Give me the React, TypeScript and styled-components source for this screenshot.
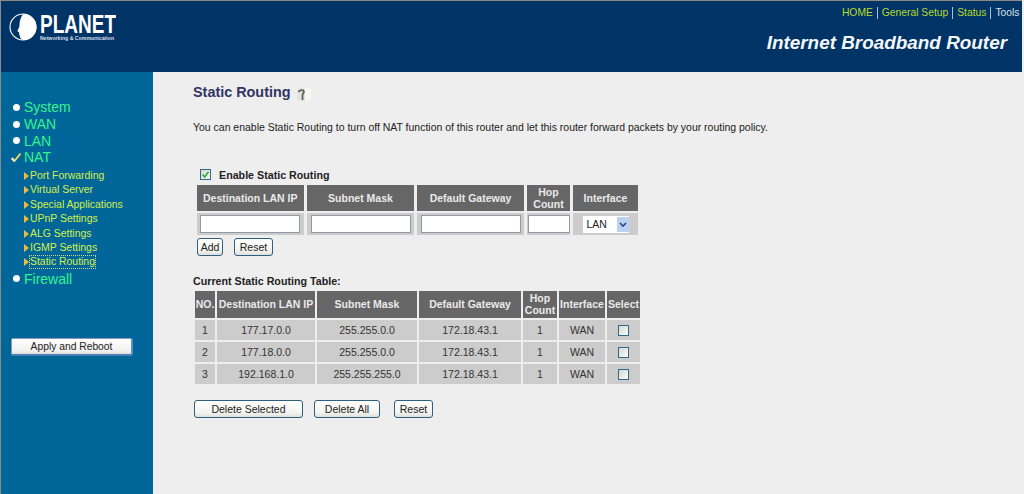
import React from "react";
import styled, { createGlobalStyle } from "styled-components";

const GlobalStyle = createGlobalStyle`
  html, body {
    margin: 0;
    padding: 0;
    background: #eeeeee;
    overflow: hidden;
  }
  body {
    font-family: "Liberation Sans", Arial, sans-serif;
  }
`;

const Page = styled.div`
  width: 1021px;
  height: 493px;
  border-top: 1px solid #8a8a80;
  border-left: 1px solid #8a8a8a;
  display: grid;
  grid-template-columns: 152px 1fr;
  grid-template-rows: 71px 1fr;
`;

const Header = styled.header`
  grid-column: 1 / 3;
  background: #003366;
  display: flex;
  justify-content: space-between;
`;

const Logo = styled.div`
  display: flex;
  align-items: flex-start;
  padding: 12px 0 0 8px;
  gap: 3px;
`;

const LogoText = styled.div`
  display: flex;
  flex-direction: column;
  margin-top: 1px;
`;

const LogoName = styled.span`
  color: #ffffff;
  font-size: 25px;
  font-weight: 700;
  line-height: 20px;
  height: 20px;
  width: 77px;
  transform: scaleX(0.76);
  transform-origin: left center;
  white-space: nowrap;
`;

const LogoTag = styled.span`
  color: #d5deea;
  font-size: 5.2px;
  font-weight: 700;
  line-height: 6px;
  margin-top: 1px;
  white-space: nowrap;
`;

const HeaderRight = styled.div`
  display: flex;
  flex-direction: column;
  align-items: flex-end;
  padding: 5px 2.5px 0 0;
`;

const TopLinks = styled.nav`
  display: flex;
  align-items: center;
  font-size: 10.3px;
  line-height: 13px;
  height: 13px;
`;

const TopLink = styled.a<{ $active?: boolean }>`
  color: ${(p) => (p.$active ? "#d9e2ea" : "#b8dc2e")};
  text-decoration: none;
`;

const Separator = styled.span`
  width: 1px;
  height: 12px;
  background: #a9bfd4;
  margin: 0 4px;
`;

const Title = styled.h1`
  margin: 13px 12.5px 0 0;
  color: #f4f7fa;
  font-size: 18.9px;
  line-height: 22px;
  font-style: italic;
  font-weight: 700;
`;

const Sidebar = styled.aside`
  background: #006699;
  padding: 27px 0 0 9px;
`;

const MainItem = styled.a`
  display: flex;
  align-items: center;
  height: 16.7px;
  color: #33f58f;
  font-size: 14px;
`;

const Bullet = styled.span`
  width: 7px;
  height: 7px;
  margin: 0 4px 0 3px;
  border-radius: 50%;
  background: radial-gradient(circle at 40% 40%, #ffffff 55%, #b9c9e4 100%);
  flex: none;
`;

const CheckMark = styled.svg`
  width: 12px;
  height: 11px;
  margin: 0 2px 0 0;
  flex: none;
`;

const SubList = styled.div`
  display: flex;
  flex-direction: column;
  padding: 3px 0 1px 14px;
`;

const SubItem = styled.a<{ $current?: boolean }>`
  display: flex;
  align-items: center;
  height: 14.4px;
  color: #d4ef4a;
  font-size: 10.45px;
  white-space: nowrap;
  span {
    outline: ${(p) => (p.$current ? "1px dotted #c9d88a" : "none")};
    line-height: 12px;
  }
`;

const Arrow = styled.i`
  width: 0;
  height: 0;
  border-left: 5px solid #f0b93a;
  border-top: 4px solid transparent;
  border-bottom: 4px solid transparent;
  margin-right: 1px;
  flex: none;
`;

const RebootButton = styled.button`
  display: block;
  width: 122px;
  height: 18px;
  margin: 51px 0 0 1px;
  padding: 0;
  font: 10.3px "Liberation Sans", Arial, sans-serif;
  color: #222222;
  background: linear-gradient(#ffffff, #f0f0ee 80%, #dcdcd8);
  border: 1px solid #7f9db9;
  border-bottom: 2px solid #4a7fb5;
  border-right: 2px solid #5b8fc0;
  border-radius: 2px;
`;

const Main = styled.main`
  padding: 11px 0 0 40px;
  color: #222222;
  font-size: 11px;
`;

const Heading = styled.h2`
  display: flex;
  align-items: center;
  gap: 5px;
  margin: 0;
  height: 18px;
  color: #333366;
  font-size: 14.4px;
  font-weight: 700;
  svg {
    margin-top: 5px;
  }
`;

const Intro = styled.p`
  margin: 20px 0 0;
  font-size: 10.47px;
  line-height: 13px;
  white-space: nowrap;
`;

const EnableRow = styled.label`
  display: flex;
  align-items: center;
  gap: 8px;
  margin: 34px 0 0 7px;
  height: 13px;
  font-size: 10.7px;
  font-weight: 700;
`;

const Box = styled.span`
  display: inline-flex;
  align-items: center;
  justify-content: center;
  box-sizing: border-box;
  width: 11px;
  height: 11px;
  border: 1px solid #2f6a8e;
  background: linear-gradient(135deg, #d8d8d2, #fbfbf8);
  vertical-align: middle;
`;

const Table = styled.table<{ $width: number; $offset: number; $spacing: number; $top: number }>`
  border-collapse: separate;
  border-spacing: ${(p) => p.$spacing}px 2px;
  table-layout: fixed;
  width: ${(p) => p.$width}px;
  margin: ${(p) => p.$top}px 0 0 ${(p) => p.$offset}px;
`;

const Head = styled.th<{ $h?: number }>`
  background: #666666;
  color: #eaeaea;
  font-size: 10.5px;
  font-weight: 700;
  line-height: 12px;
  height: ${(p) => (p.$h ? `${p.$h}px` : "auto")};
  padding: 0;
  white-space: nowrap;
  text-align: center;
`;

const Cell = styled.td<{ $h: number }>`
  background: #cccccc;
  color: #333333;
  font-size: 10.5px;
  height: ${(p) => p.$h}px;
  padding: 0;
  text-align: center;
`;

const TextInput = styled.input<{ $w: number }>`
  display: block;
  box-sizing: border-box;
  width: ${(p) => p.$w}px;
  height: 18px;
  margin: 0 auto;
  background: #ffffff;
  border: 1px solid #8f9aa6;
  padding: 0;
`;

const SelectWrap = styled.div`
  position: relative;
  width: 46px;
  height: 17px;
  margin: 0 auto;
  background: #ffffff;
`;

const NativeSelect = styled.select`
  appearance: none;
  display: block;
  width: 100%;
  height: 100%;
  border: 0;
  background: transparent;
  padding: 0 0 0 4px;
  font: 10.5px "Liberation Sans", Arial, sans-serif;
  color: #222222;
`;

const SelectArrow = styled.svg`
  position: absolute;
  top: 1px;
  right: 0;
  width: 12px;
  height: 15px;
  background: #bcd0f2;
  pointer-events: none;
`;

const ButtonRow = styled.div<{ $gap: number; $top: number; $left: number }>`
  display: flex;
  gap: ${(p) => p.$gap}px;
  margin: ${(p) => p.$top}px 0 0 ${(p) => p.$left}px;
`;

const Btn = styled.button<{ $w: number; $push?: number }>`
  box-sizing: border-box;
  width: ${(p) => p.$w}px;
  height: 18px;
  margin-left: ${(p) => p.$push ?? 0}px;
  padding: 0;
  font: 10.5px "Liberation Sans", Arial, sans-serif;
  color: #222222;
  background: linear-gradient(#ffffff, #f2f2ee 75%, #dededa);
  border: 1px solid #2f5f7f;
  border-radius: 3px;
`;

const TableTitle = styled.h3`
  margin: 19px 0 0;
  height: 13px;
  font-size: 10.7px;
  line-height: 13px;
  font-weight: 700;
`;

const routes = [
  { no: 1, ip: "177.17.0.0", mask: "255.255.0.0", gw: "172.18.43.1", hop: 1, iface: "WAN" },
  { no: 2, ip: "177.18.0.0", mask: "255.255.0.0", gw: "172.18.43.1", hop: 1, iface: "WAN" },
  { no: 3, ip: "192.168.1.0", mask: "255.255.255.0", gw: "172.18.43.1", hop: 1, iface: "WAN" },
];

const subItems = [
  "Port Forwarding",
  "Virtual Server",
  "Special Applications",
  "UPnP Settings",
  "ALG Settings",
  "IGMP Settings",
  "Static Routing",
];

const App: React.FC = () => (
  <Page>
    <GlobalStyle />
    <Header>
      <Logo>
        <svg width="28" height="28" viewBox="0 0 28 28">
          <circle cx="14" cy="14" r="13" fill="#003366" stroke="#ffffff" strokeWidth="1.1" />
          <path
            d="M14 1C22 1 27.5 7 27.5 14S22 27.5 14 27C12 26 10.5 24.5 11 23C9.5 21.5 10.5 20 10 19C8.5 19 8 18 9 16.5C10 15 10.5 13.5 10.5 11.5C10.5 7.5 12 4 14 1Z"
            fill="#ffffff"
          />
        </svg>
        <LogoText>
          <LogoName>PLANET</LogoName>
          <LogoTag>Networking &amp; Communication</LogoTag>
        </LogoText>
      </Logo>
      <HeaderRight>
        <TopLinks>
          <TopLink>HOME</TopLink>
          <Separator />
          <TopLink>General Setup</TopLink>
          <Separator />
          <TopLink>Status</TopLink>
          <Separator />
          <TopLink $active>Tools</TopLink>
        </TopLinks>
        <Title>Internet Broadband Router</Title>
      </HeaderRight>
    </Header>

    <Sidebar>
      <MainItem><Bullet />System</MainItem>
      <MainItem><Bullet />WAN</MainItem>
      <MainItem><Bullet />LAN</MainItem>
      <MainItem>
        <CheckMark viewBox="0 0 12 11">
          <path d="M2 6L4.5 9L10.5 1.5" fill="none" stroke="#e8d860" strokeWidth="2" />
          <path d="M1.5 6.5L4 9" fill="none" stroke="#ffffff" strokeWidth="1.2" />
        </CheckMark>
        NAT
      </MainItem>
      <SubList>
        {subItems.map((item) => (
          <SubItem key={item} $current={item === "Static Routing"}>
            <Arrow />
            <span>{item}</span>
          </SubItem>
        ))}
      </SubList>
      <MainItem><Bullet />Firewall</MainItem>
      <RebootButton>Apply and Reboot</RebootButton>
    </Sidebar>

    <Main>
      <Heading>
        Static Routing
        <svg width="16" height="15" viewBox="0 0 16 15">
          <rect x="1" y="1" width="14" height="13" rx="3" fill="#e2e2de" />
          <path d="M9 1h4a2 2 0 0 1 2 2v9a2 2 0 0 1-2 2H9z" fill="#f6f6f4" />
          <path d="M2.5 5C3.5 2.5 7.5 2.5 8 4.5C8 6 6.5 6.5 6.5 8V13" fill="none" stroke="#5c5c58" strokeWidth="1.7" />
        </svg>
      </Heading>
      <Intro>
        You can enable Static Routing to turn off NAT function of this router and let this router forward packets by your routing policy.
      </Intro>

      <EnableRow>
        <Box>
          <svg width="9" height="9" viewBox="0 0 9 9">
            <path d="M1.5 4.5L3.7 7L7.5 1.8" fill="none" stroke="#2eaa3a" strokeWidth="1.6" />
          </svg>
        </Box>
        Enable Static Routing
      </EnableRow>

      <Table $width={447.5} $offset={0.5} $spacing={3} $top={2}>
        <colgroup>
          <col width="107.5" />
          <col width="107" />
          <col width="107" />
          <col width="43" />
          <col width="65" />
        </colgroup>
        <thead>
          <tr>
            <Head $h={26}>Destination LAN IP</Head>
            <Head>Subnet Mask</Head>
            <Head>Default Gateway</Head>
            <Head>Hop<br />Count</Head>
            <Head>Interface</Head>
          </tr>
        </thead>
        <tbody>
          <tr>
            <Cell $h={22}><TextInput $w={100} /></Cell>
            <Cell $h={22}><TextInput $w={100} /></Cell>
            <Cell $h={22}><TextInput $w={100} /></Cell>
            <Cell $h={22}><TextInput $w={42} /></Cell>
            <Cell $h={22}>
              <SelectWrap>
                <NativeSelect defaultValue="LAN">
                  <option>LAN</option>
                  <option>WAN</option>
                </NativeSelect>
                <SelectArrow viewBox="0 0 12 15">
                  <path d="M3 6L6 9L9 6" fill="none" stroke="#2a4a8a" strokeWidth="1.6" />
                </SelectArrow>
              </SelectWrap>
            </Cell>
          </tr>
        </tbody>
      </Table>

      <ButtonRow $gap={11} $top={1} $left={4}>
        <Btn $w={26}>Add</Btn>
        <Btn $w={39}>Reset</Btn>
      </ButtonRow>

      <TableTitle>Current Static Routing Table:</TableTitle>

      <Table $width={449} $offset={0} $spacing={2} $top={1}>
        <colgroup>
          <col width="20" />
          <col width="98" />
          <col width="100" />
          <col width="102" />
          <col width="34" />
          <col width="46" />
          <col width="33" />
        </colgroup>
        <thead>
          <tr>
            <Head $h={26.5}>NO.</Head>
            <Head>Destination LAN IP</Head>
            <Head>Subnet Mask</Head>
            <Head>Default Gateway</Head>
            <Head>Hop<br />Count</Head>
            <Head>Interface</Head>
            <Head>Select</Head>
          </tr>
        </thead>
        <tbody>
          {routes.map((r) => (
            <tr key={r.no}>
              <Cell $h={20}>{r.no}</Cell>
              <Cell $h={20}>{r.ip}</Cell>
              <Cell $h={20}>{r.mask}</Cell>
              <Cell $h={20}>{r.gw}</Cell>
              <Cell $h={20}>{r.hop}</Cell>
              <Cell $h={20}>{r.iface}</Cell>
              <Cell $h={20}><Box /></Cell>
            </tr>
          ))}
        </tbody>
      </Table>

      <ButtonRow $gap={11} $top={14} $left={1}>
        <Btn $w={109}>Delete Selected</Btn>
        <Btn $w={66}>Delete All</Btn>
        <Btn $w={39} $push={3}>Reset</Btn>
      </ButtonRow>
    </Main>
  </Page>
);

export default App;
